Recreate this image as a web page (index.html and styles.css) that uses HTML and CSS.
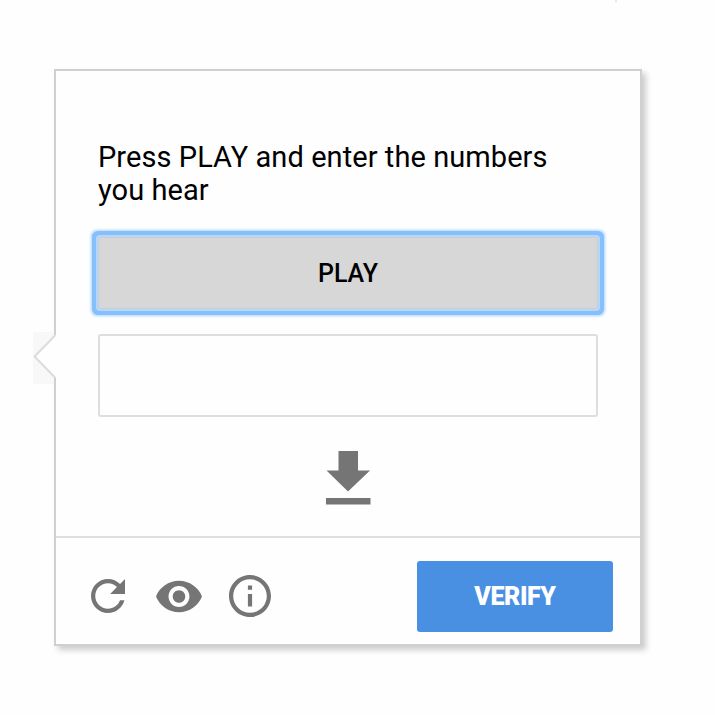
FILE: index.html
```html
<!DOCTYPE html>
<html lang="en">
<head>
<meta charset="utf-8">
<title>Audio challenge</title>
<link rel="stylesheet" href="styles.css">
</head>
<body>
<span class="tick"></span>
<main class="card">
  <svg class="pointer" viewBox="0 0 24 52"><path class="pointer-bg" d="M0 0H21V52H0z"/><path class="pointer-fill" d="M24 3.500H22L1.500 24.500 22 45.500H24z"/><path class="pointer-line" d="M22 3.500L1.500 24.500 22 45.500"/></svg>
  <section class="challenge">
    <p class="prompt"><span class="line">Press PLAY and enter the numbers</span><span class="line second">you hear</span></p>
    <button class="play"><span>PLAY</span></button>
    <input class="answer" type="text" aria-label="Numbers">
    <svg class="download" viewBox="0 0 46 56"><path d="M12.500 1H32V20.500H44L22 41.500 .500 20.500H12.500zM0 48H44.500V54.500H0z"/></svg>
  </section>
  <footer class="controls">
    <div class="icons">
      <svg class="icon refresh" viewBox="4 4 16 16"><path d="M17.650 6.350C16.200 4.900 14.210 4 12 4c-4.420 0-7.990 3.580-7.990 8s3.570 8 7.990 8c3.730 0 6.840-2.550 7.730-6h-2.080c-.820 2.330-3.040 4-5.650 4-3.310 0-6-2.690-6-6s2.690-6 6-6c1.660 0 3.140.690 4.220 1.780L13 11h7V4z"/></svg>
      <svg class="icon eye" viewBox="1 4.500 22 15"><path d="M12 4.500C7 4.500 2.730 7.610 1 12c1.730 4.390 6 7.500 11 7.500s9.270-3.110 11-7.500c-1.730-4.390-6-7.500-11-7.500zM12 17c-2.760 0-5-2.240-5-5s2.240-5 5-5 5 2.240 5 5-2.240 5-5 5zm0-8c-1.660 0-3 1.340-3 3s1.340 3 3 3 3-1.340 3-3-1.340-3-3-3z"/></svg>
      <svg class="icon info" viewBox="2 2 20 20"><path d="M11 17h2v-6h-2v6zm1-15C6.480 2 2 6.480 2 12s4.480 10 10 10 10-4.480 10-10S17.520 2 12 2zm0 18c-4.410 0-8-3.590-8-8s3.590-8 8-8 8 3.590 8 8-3.590 8-8 8zM11 9h2V7h-2v2z"/></svg>
    </div>
    <button class="verify"><span>VERIFY</span></button>
  </footer>
</main>
</body>
</html>
```
FILE: styles.css
```css
* { box-sizing: border-box; }
body {
  margin: 0;
  height: 715px;
  overflow: hidden;
  background: #fefefe;
  font-family: Roboto, sans-serif;
  color: #000;
  display: flex;
  align-items: flex-start;
}
.tick {
  position: absolute;
  left: 615px;
  top: 0;
  width: 2px;
  height: 2px;
  background: #e8e8e8;
}
.card {
  position: relative;
  width: 588px;
  height: 577px;
  margin: 69px 0 0 54px;
  border: 2px solid #d0d0d0;
  background: #fefefe;
  box-shadow: 4px 4px 6px rgba(0, 0, 0, .2);
  display: flex;
  flex-direction: column;
}
.pointer {
  position: absolute;
  left: -23px;
  top: 261px;
  width: 24px;
  height: 52px;
}
.pointer-bg { fill: #f8f8f8; }
.pointer-fill { fill: #fefefe; }
.pointer-line { fill: none; stroke: #dcdcdc; stroke-width: 2; }
.challenge {
  height: 465px;
  padding: 70px 42px 0;
  display: flex;
  flex-direction: column;
}
.prompt {
  margin: 0;
  font-size: 29px;
  line-height: 33px;
  letter-spacing: .07px;
}
.line { display: block; white-space: nowrap; width: max-content; }
.play {
  height: 72px;
  margin-top: 30px;
  border: 1px solid #cbcdd1;
  border-radius: 2px;
  outline: 0;
  background: #d7d7d7;
  box-shadow: 0 0 0 2px #b5d7fc, 0 0 0 6px #85bffc, 0 0 3px 6.500px #a9d2fd;
  font: 500 25px Roboto, sans-serif;
  color: #000;
}
.answer {
  height: 83px;
  margin-top: 25px;
  border: 2px solid #dedede;
  border-radius: 3px;
  background: #fefefe;
}
.download {
  width: 46px;
  height: 56px;
  margin: 33px auto 0 228px;
  fill: #757575;
}
.controls {
  flex: 1;
  border-top: 2px solid #dfdfdf;
  padding: 23px 27px 0 35px;
  display: flex;
  justify-content: space-between;
}
.icons { display: flex; align-items: center; height: 70px; }
.icon { fill: #757575; }
.refresh { width: 34px; height: 34px; }
.eye { width: 46px; height: 33px; margin-left: 31px; }
.info { width: 42px; height: 42px; margin-left: 27px; }
.verify {
  width: 196px;
  height: 71px;
  border: 0;
  border-radius: 3px;
  background: #4a90e2;
  color: #fff;
  font: 900 25px Roboto, sans-serif;
  letter-spacing: -.4px;
}
```
